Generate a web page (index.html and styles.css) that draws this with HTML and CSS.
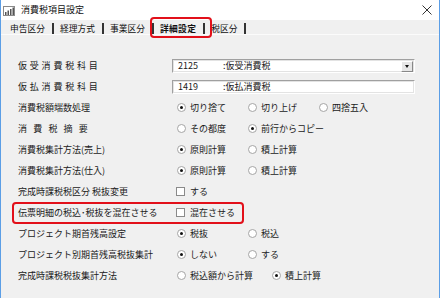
FILE: index.html
```html
<!DOCTYPE html>
<html lang="ja">
<head>
<meta charset="utf-8">
<link rel="stylesheet" href="styles.css">
</head>
<body>
<div class="win">
  <div class="titlebar">
    <svg class="appicon" width="12" height="10" viewBox="0 0 12 10">
      <rect x="0.5" y="0.5" width="11" height="9" fill="#fff" stroke="#8a8a8a"/>
      <rect x="2" y="6" width="1.5" height="3" fill="#555"/>
      <rect x="4.5" y="4.5" width="1.5" height="4.5" fill="#555"/>
      <rect x="7" y="3" width="1.5" height="6" fill="#555"/>
      <rect x="9.5" y="1.5" width="1.5" height="7.5" fill="#555"/>
    </svg>
    <span class="title">消費税項目設定</span>
    <svg class="close" width="10" height="10" viewBox="0 0 10 10">
      <path d="M0.5 0.5 L9.5 9.5 M9.5 0.5 L0.5 9.5" stroke="#333" stroke-width="1" fill="none"/>
    </svg>
  </div>
  <div class="tabs">
    <span class="tab">申告区分</span><span class="sep"></span>
    <span class="tab">経理方式</span><span class="sep"></span>
    <span class="tab">事業区分</span><span class="sep"></span>
    <span class="tab active">詳細設定</span><span class="sep"></span>
    <span class="tab">税区分</span><span class="sep"></span>
  </div>
  <div class="content">
    <div class="row">
      <span class="lbl sp3">仮受消費税科目</span>
      <div class="field"><span class="code">2125</span><span class="name">:仮受消費税</span><span class="ddbtn"><span class="tri"></span></span></div>
    </div>
    <div class="row">
      <span class="lbl sp3">仮払消費税科目</span>
      <div class="field"><span class="code">1419</span><span class="name">:仮払消費税</span></div>
    </div>
    <div class="row">
      <span class="lbl">消費税額端数処理</span>
      <div class="opts">
        <span class="opt"><span class="radio on"></span>切り捨て</span>
        <span class="opt"><span class="radio"></span>切り上げ</span>
        <span class="opt"><span class="radio"></span>四捨五入</span>
      </div>
    </div>
    <div class="row">
      <span class="lbl sp6">消費税摘要</span>
      <div class="opts">
        <span class="opt"><span class="radio"></span>その都度</span>
        <span class="opt"><span class="radio on"></span>前行からコピー</span>
      </div>
    </div>
    <div class="row">
      <span class="lbl">消費税集計方法(売上)</span>
      <div class="opts">
        <span class="opt"><span class="radio on"></span>原則計算</span>
        <span class="opt"><span class="radio"></span>積上計算</span>
      </div>
    </div>
    <div class="row">
      <span class="lbl">消費税集計方法(仕入)</span>
      <div class="opts">
        <span class="opt"><span class="radio on"></span>原則計算</span>
        <span class="opt"><span class="radio"></span>積上計算</span>
      </div>
    </div>
    <div class="row">
      <span class="lbl">完成時課税税区分 税抜変更</span>
      <div class="opts">
        <span class="opt"><span class="check"></span>する</span>
      </div>
    </div>
    <div class="row">
      <span class="lbl">伝票明細の税込･税抜を混在させる</span>
      <div class="opts">
        <span class="opt"><span class="check"></span>混在させる</span>
      </div>
    </div>
    <div class="row">
      <span class="lbl">プロジェクト期首残高設定</span>
      <div class="opts">
        <span class="opt"><span class="radio on"></span>税抜</span>
        <span class="opt"><span class="radio"></span>税込</span>
      </div>
    </div>
    <div class="row">
      <span class="lbl">プロジェクト別期首残高税抜集計</span>
      <div class="opts">
        <span class="opt"><span class="radio on"></span>しない</span>
        <span class="opt"><span class="radio"></span>する</span>
      </div>
    </div>
    <div class="row">
      <span class="lbl">完成時課税税抜集計方法</span>
      <div class="opts">
        <span class="opt wide"><span class="radio"></span>税込額から計算</span>
        <span class="opt"><span class="radio on"></span>積上計算</span>
      </div>
    </div>
  </div>
  <div class="hl hl-tab"></div>
  <div class="hl hl-row"></div>
</div>
</body>
</html>
```
FILE: styles.css
```css
* { box-sizing: border-box; }
html, body { margin: 0; padding: 0; }
body {
  width: 440px;
  height: 298px;
  overflow: hidden;
  background: #f0f0f0;
  font-family: "Noto Sans CJK JP", "Noto Sans", sans-serif;
  font-size: 9px;
  color: #1a1a1a;
}
.win {
  position: relative;
  width: 440px;
  height: 298px;
  border-left: 1px solid #5b9ee6;
  border-right: 1px solid #5b9ee6;
  background: #f0f0f0;
}
.titlebar {
  height: 20px;
  background: #fff;
  display: flex;
  align-items: center;
  padding-left: 2px;
}
.appicon { display: block; margin-top: 1px; }
.title {
  margin-left: 6px;
  line-height: 10px;
  font-size: 9px;
  color: #111;
}
.close { margin-left: auto; margin-right: 7px; display: block; }
.tabs {
  height: 15px;
  display: flex;
  align-items: center;
  padding-left: 9px;
  border-bottom: 1px solid #fbfbfb;
  gap: 6.5px;
}
.tab {
  line-height: 10px;
  padding-top: 3px;
  font-size: 8.75px;
  color: #111;
}
.tab.active {
  font-weight: bold;
  letter-spacing: 0.3px;
}
.sep {
  width: 2px;
  height: 11px;
  margin-top: 3px;
  background: #333;
}
.content {
  padding-top: 20px;
  padding-left: 17px;
}
.row {
  height: 21px;
  display: flex;
  align-items: center;
}
.lbl {
  width: 159px;
  flex: none;
  line-height: 10px;
  white-space: nowrap;
}
.sp3 { letter-spacing: 2.8px; }
.sp6 { letter-spacing: 6.2px; }
.field {
  margin-left: -5px;
  width: 243px;
  height: 14px;
  background: #fff;
  border-top: 1px solid #a0a0a0;
  border-left: 1px solid #a0a0a0;
  border-right: 1px solid #fff;
  border-bottom: 1px solid #fff;
  box-shadow: inset 1px 1px 0 #696969;
  outline: 1px solid #e3e3e3;
  outline-offset: -2px;
  display: flex;
  align-items: center;
  position: relative;
  line-height: 10px;
}
.code { width: 50px; padding-left: 5px; }
.ddbtn {
  position: absolute;
  right: 1px;
  top: 1px;
  width: 12px;
  height: 11px;
  background: #e6e6e6;
  border-top: 1px solid #fff;
  border-left: 1px solid #fff;
  border-right: 1px solid #888;
  border-bottom: 1px solid #888;
  display: flex;
  align-items: center;
  justify-content: center;
}
.tri {
  width: 0;
  height: 0;
  border-left: 2.5px solid transparent;
  border-right: 2.5px solid transparent;
  border-top: 3px solid #111;
  margin-top: 1px;
}
.opts { display: flex; align-items: center; }
.opt {
  width: 71px;
  display: flex;
  align-items: center;
  line-height: 10px;
  white-space: nowrap;
}
.opt.wide { width: 95px; }
.radio {
  width: 9px;
  height: 9px;
  border-radius: 50%;
  border: 1px solid #a5a5a5;
  background: #fff;
  margin-right: 4px;
  flex: none;
  display: flex;
  align-items: center;
  justify-content: center;
}
.radio.on::after {
  content: "";
  width: 3px;
  height: 3px;
  border-radius: 50%;
  background: #111;
}
.check {
  width: 9px;
  height: 9px;
  border: 1px solid #8a8a8a;
  background: #fff;
  margin-left: -1px;
  margin-right: 5px;
  flex: none;
}
.hl {
  position: absolute;
  border: 2px solid #e2101a;
  border-radius: 4px;
}
.hl-tab { left: 149px; top: 17px; width: 62px; height: 21px; }
.hl-row { left: 11px; top: 202px; width: 232px; height: 22px; }
```
